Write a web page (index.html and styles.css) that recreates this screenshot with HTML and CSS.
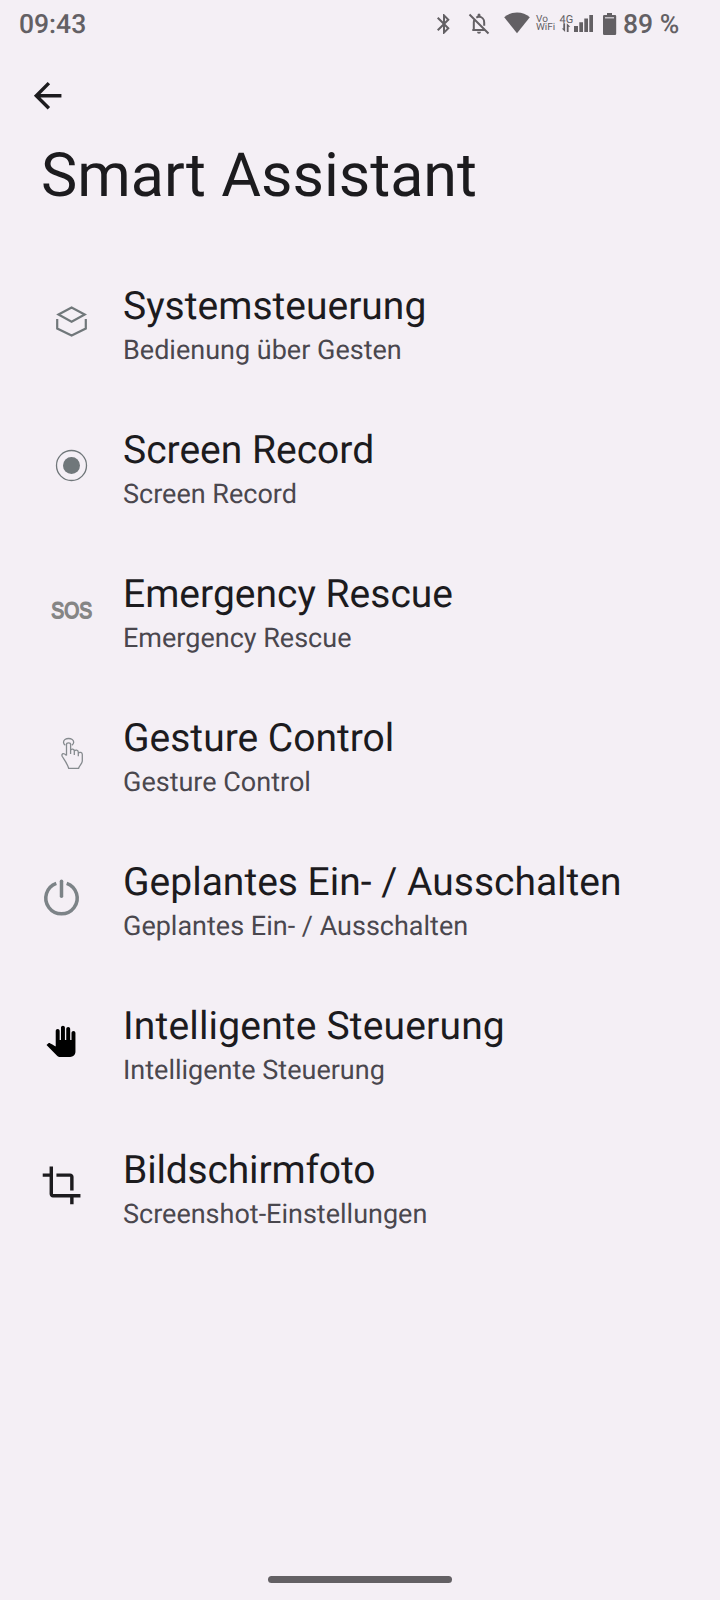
FILE: index.html
```html
<!DOCTYPE html>
<html lang="de">
<head>
<meta charset="utf-8">
<title>Smart Assistant</title>
<link rel="stylesheet" href="styles.css">
</head>
<body>
<div class="screen">
  <header class="status">
    <span class="clock">09:43</span>
    <div class="status-icons">
      <svg class="bt" width="24" height="24" viewBox="0 0 24 24"><path d="M17.71 7.71L12 2h-1v7.59L6.41 5 5 6.41 10.59 12 5 17.59 6.41 19 11 14.41V22h1l5.71-5.71-4.3-4.29 4.3-4.29zM13 5.83l1.88 1.88L13 9.59V5.83zm1.88 10.46L13 18.17v-3.76l1.88 1.88z"/></svg>
      <svg class="bell" width="24" height="24" viewBox="466 12 24 24"><path class="line" d="M469.5 14.5l19 19M472.3 30h12.4M473.8 30v-7.5c0-1.2.3-2.3.8-3.2M476.3 17.6c.8-.5 1.7-.8 2.7-.8 2.9 0 5.2 2.4 5.2 5.6v3.4"/><path d="M477.5 17v-2a1.5 1.5 0 0 1 3 0v2zM477 31.7h4a2 2 0 0 1-4 0z"/></svg>
      <svg class="wifi" width="26" height="22" viewBox="0 0 26 22"><path d="M13 21.300L.2 5.200C3.500 2.200 8 .4 13 .4s9.500 1.800 12.800 4.800z"/></svg>
      <span class="vowifi"><span>Vo</span><span>WiFi</span></span>
      <svg class="signal" width="34" height="20" viewBox="560 14 34 20"><text class="net" x="559.500" y="23">4G</text><path d="M574 26h4v6h-4zM579.300 22.300h3.700V32h-3.700zM584.300 18.500h3.700V32h-3.700zM589.300 15h3.700v17h-3.700zM563.300 23.300h1.800v8.700l-3.300-3.500h1.500zM566.800 32v-8.700l3.500 3.500h-1.700V32z"/></svg>
      <svg class="battery" width="14" height="22" viewBox="603 13 14 22"><path d="M607 13h5v2h3a1.200 1.200 0 0 1 1.200 1.200v17.600a1.200 1.200 0 0 1-1.200 1.200h-10.800a1.200 1.200 0 0 1-1.200-1.200V16.200a1.200 1.200 0 0 1 1.200-1.200h2.800z"/><path class="gap" d="M605 17h9v1.500h-9z"/></svg>
      <span class="percent">89 %</span>
    </div>
  </header>
  <nav class="bar"><svg width="42" height="42" viewBox="0 0 24.400 24.400"><path d="M20 11H7.830l5.590-5.590L12 4l-8 8 8 8 1.410-1.410L7.830 13H20v-2z"/></svg></nav>
  <h1 class="heading">Smart Assistant</h1>
  <main class="list">
    <section class="row">
      <svg class="icon" width="72" height="72" viewBox="30 286 72 72"><path class="cube" d="M58.500 314.500L71.600 307.500 84.700 314.500 71.600 321.700zM57.200 319v9.500l14.400 7 14.200-7V319"/></svg>
      <div class="text"><h2>Systemsteuerung</h2><p>Bedienung über Gesten</p></div>
    </section>
    <section class="row">
      <svg class="icon" width="72" height="72" viewBox="30 430 72 72"><circle class="ring" cx="71.500" cy="465.500" r="15"/><circle class="dot" cx="71.500" cy="465.500" r="8.500"/></svg>
      <div class="text"><h2>Screen Record</h2><p>Screen Record</p></div>
    </section>
    <section class="row">
      <svg class="icon" width="72" height="72" viewBox="30 574 72 72"><text class="sos" x="51.300" y="617.500" textLength="40.800" lengthAdjust="spacingAndGlyphs">SOS</text></svg>
      <div class="text"><h2>Emergency Rescue</h2><p>Emergency Rescue</p></div>
    </section>
    <section class="row">
      <svg class="icon" width="72" height="72" viewBox="30 718 72 72"><path class="gesture" d="M65.300 745.200c-1.300-.8-1.800-1.800-1.800-2.900 0-2.200 2.300-3.800 5.100-3.800s5.100 1.600 5.100 3.800c0 1.300-.8 2.200-1.800 2.900M66.500 755.500V744.600c0-2.300 4.100-2.300 4.100 0v9.500M70.600 750.200c.8-1.700 3.700-1.500 3.700.8v4M74.300 751c1.200-1.500 4-1.200 4 1.200v4M78.300 753c1.500-1.300 4-.7 4 1.500v6.500c0 2.500-3 4.500-3.700 7.300h-9.900c-1.300-4.500-4.200-8-6.400-11.800-.8-1.500-.2-2.800 1-2.800 1.300 0 2.300 1 3.200 1.800"/></svg>
      <div class="text"><h2>Gesture Control</h2><p>Gesture Control</p></div>
    </section>
    <section class="row">
      <svg class="icon" width="72" height="72" viewBox="30 862 72 72"><path class="power" d="M56.300 883.300a15.700 15.700 0 1 0 10.400 0"/><path class="power round" d="M61.500 881.300v15"/></svg>
      <div class="text"><h2>Geplantes Ein- / Ausschalten</h2><p>Geplantes Ein- / Ausschalten</p></div>
    </section>
    <section class="row">
      <svg class="icon" width="72" height="72" viewBox="30 1006 72 72"><path class="hand" transform="translate(45.200 1025.800) scale(1.315 1.300)" d="M23 5.500V20c0 2.200-1.800 4-4 4h-7.300c-1.080 0-2.100-.43-2.850-1.190L1 14.830s1.260-1.230 1.300-1.250c.22-.19.49-.29.79-.29.22 0 .42.06.6.16.04.01 4.310 2.460 4.310 2.460V4c0-.83.67-1.500 1.500-1.500S11 3.170 11 4v7h1V1.500c0-.83.67-1.500 1.500-1.500S15 .67 15 1.500V11h1V2.500c0-.83.67-1.500 1.500-1.500s1.500.67 1.500 1.500V11h1V5.500c0-.83.67-1.500 1.500-1.500s1.500.67 1.500 1.500z"/></svg>
      <div class="text"><h2 class="wide">Intelligente Steuerung</h2><p>Intelligente Steuerung</p></div>
    </section>
    <section class="row">
      <svg class="icon" width="72" height="72" viewBox="30 1150 72 72"><path transform="translate(41 1164.800) scale(1.715)" d="M17 15h2V7c0-1.100-.9-2-2-2H9v2h8v8zM7 17V1H5v4H1v2h4v10c0 1.100.9 2 2 2h10v4h2v-4h4v-2H7z"/></svg>
      <div class="text"><h2 class="tight">Bildschirmfoto</h2><p>Screenshot-Einstellungen</p></div>
    </section>
  </main>
  <footer class="home"><div class="pill"></div></footer>
</div>
</body>
</html>
```
FILE: styles.css
```css
* { box-sizing: border-box; margin: 0; padding: 0; }
body { background: #f4eff5; color: #1c1b1e; font-family: Roboto, "Liberation Sans", sans-serif; text-rendering: geometricPrecision; }
svg { display: block; flex: none; fill: #1c1b1e; }
.screen { display: flex; flex-direction: column; width: 720px; height: 1600px; overflow: hidden; }
.status { display: flex; justify-content: space-between; height: 48px; padding: 0 41px 0 19px; color: #636064; font-weight: 500; font-size: 26.500px; line-height: 50px; }
.status svg { fill: #636064; }
.status-icons { display: flex; align-items: flex-start; }
.bt { margin-top: 11.500px; }
.bell { margin: 12px 0 0 10px; }
.wifi { margin: 12px 0 0 14px; }
.line { fill: none; stroke: #636064; stroke-width: 2; }
.status .gap { fill: #c9c4ca; }
.vowifi { display: flex; flex-direction: column; width: 19px; margin: 16px 0 0 6px; font-size: 10px; line-height: 8px; font-weight: 400; }
.signal { margin: 14px 0 0 5px; overflow: visible; }
.net { font-size: 11px; font-weight: 400; }
.battery { margin: 13px 0 0 9px; }
.percent { width: 56px; margin-left: 6px; white-space: nowrap; }
.bar { height: 76px; padding: 26.500px 0 0 27px; }
.heading { height: 126px; padding-left: 41px; font-size: 61px; line-height: 102px; font-weight: 400; }
.list { display: flex; flex-direction: column; }
.row { display: flex; align-items: center; height: 144px; padding-left: 30px; gap: 21px; }
.text { display: flex; flex-direction: column; padding-top: 7px; white-space: nowrap; }
.text h2 { font-size: 39px; line-height: 48px; font-weight: 400; }
.text .wide { letter-spacing: 0.170px; }
.text .tight { letter-spacing: -0.170px; }
.text p { font-size: 27px; line-height: 40px; color: #4a474e; }
.cube { fill: none; stroke: #70777a; stroke-width: 2.200; }
.ring { fill: none; stroke: #70777a; stroke-width: 1.300; }
.dot { fill: #70777a; }
.sos { font: 22.500px "Liberation Sans", sans-serif; fill: #858585; stroke: #858585; stroke-width: 1.500; }
.gesture { fill: none; stroke: #858a8e; stroke-width: 1.300; }
.power { fill: none; stroke: #7c8387; stroke-width: 3.500; }
.round { stroke-linecap: round; }
.hand { fill: #000; }
.home { display: flex; justify-content: center; align-items: flex-end; flex: 1; padding-bottom: 17px; }
.pill { width: 184px; height: 7px; border-radius: 3.500px; background: #636064; }
```
